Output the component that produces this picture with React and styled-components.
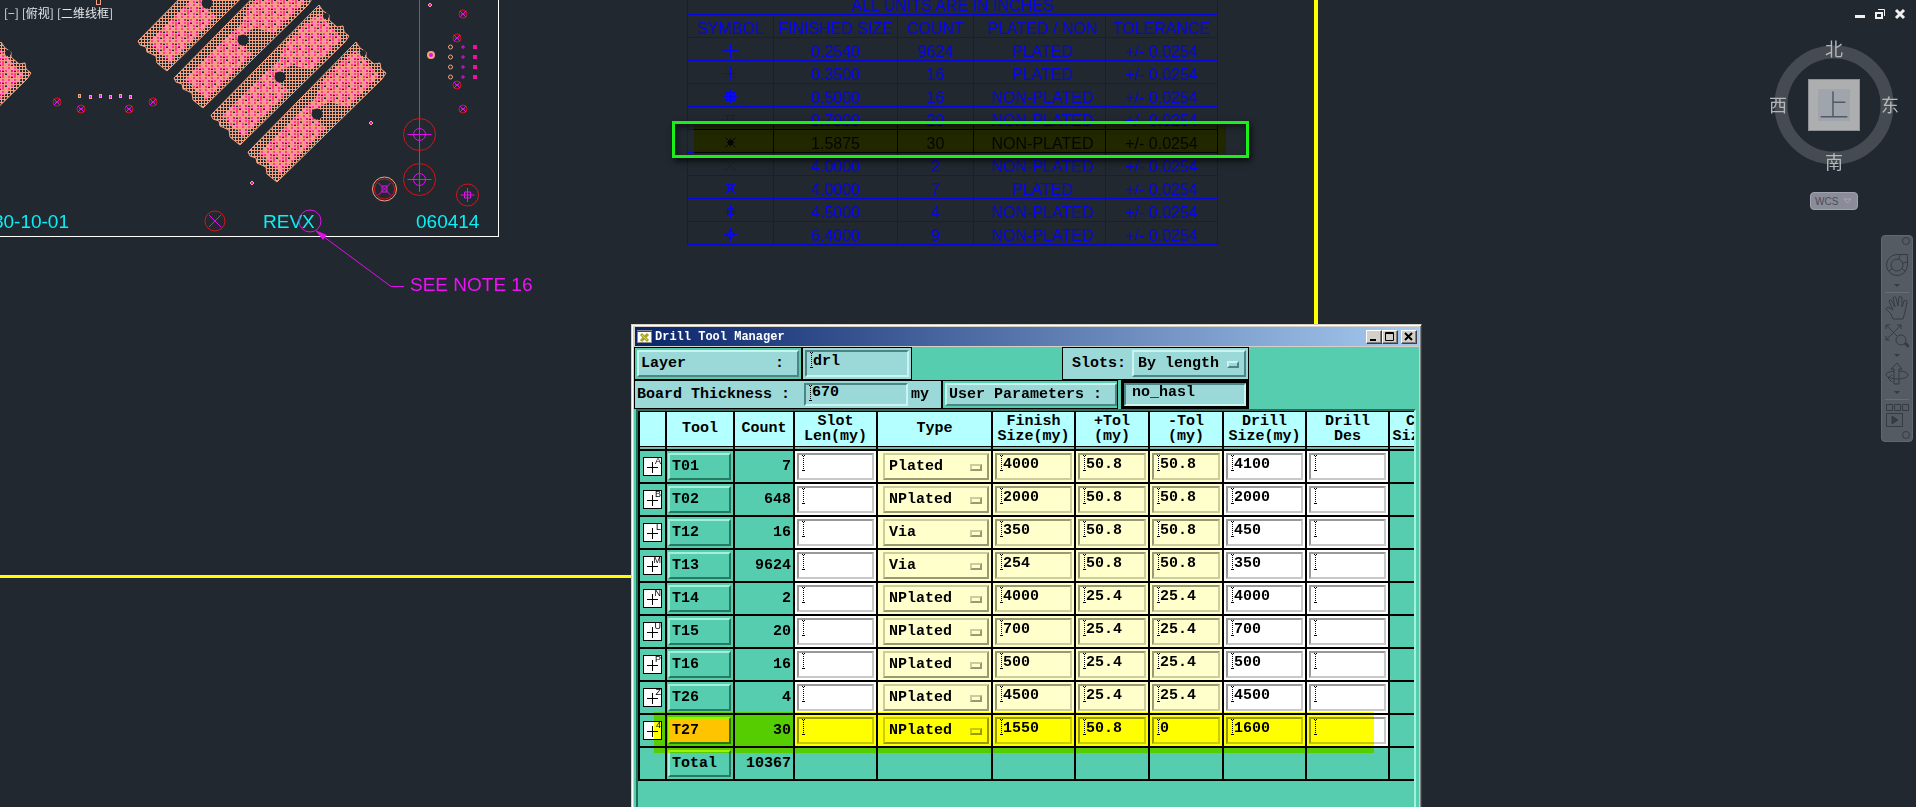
import React, { useState } from "react";
import styled, { createGlobalStyle, css } from "styled-components";

const GlobalStyle = createGlobalStyle`
  *, *::after {
    box-sizing: border-box;
  }

  body {
    margin: 0;
    background: #212830;
    font-family: "Liberation Sans", Arial, "Noto Sans CJK SC", sans-serif;
  }

  button, input, select {
    margin: 0;
    font: inherit;
    color: inherit;
    outline: none;
  }
`;

const mono = `"Liberation Mono", "Courier New", monospace`;

const raised = (light, dark) => css`
  border: 2px solid;
  border-color: ${light} ${dark} ${dark} ${light};
`;

/* ---------- board drawing ---------- */

const Desktop = styled.main`
  position: relative;
  height: 100vh;
  overflow: hidden;
  background: #212830;
`;

const Drawing = styled.svg`
  display: block;
  width: 100%;
  height: 100%;
  font-family: "Liberation Sans", Arial, sans-serif;
  font-size: 19px;
`;

const SALMON = "#f4a380";
const RED = "#d4141c";
const MAGENTA = "#e010e8";

const Finger = ({ x, y }) => (
  <g transform={`translate(${x} ${y})`}>
    <path
      d="M108 0 L112 6 L118 10 L118 15 L126 22 L132 21 L133 27 L138 31 L134 37 L29 140 L19 132 L18 125 L9 121 L8 116 L2 114 L0 110 Z"
      fill="url(#mesh)"
      stroke={SALMON}
    />
    <path
      d="M93 20 L108 8 L131 34 L100 65 L80 60 L62 72 L78 86 L32 132 L10 112 L54 68 L68 56 L72 42 Z"
      fill="url(#dots)"
    />
    <circle cx="69" cy="72" r="5.5" fill="#212830" />
    <circle cx="115" cy="11" r="3" fill="#212830" />
  </g>
);

const Pad = ({ x, y }) => (
  <g transform={`translate(${x} ${y})`} fill="none">
    <circle r="4" stroke={RED} />
    <path d="M-3 -3 L3 3 M-3 3 L3 -3 M-2 0 H2" stroke={MAGENTA} />
  </g>
);

const Hole = ({ x, y }) => (
  <g transform={`translate(${x} ${y})`} fill="none">
    <circle r="16" stroke={RED} />
    <circle r="6" stroke={MAGENTA} />
    <path d="M-12 0 H12 M0 -12 V12" stroke={MAGENTA} />
  </g>
);

const Dot = ({ x, y }) => (
  <g transform={`translate(${x} ${y})`}>
    <path d="M0 -2 L2 0 L0 2 L-2 0 Z" fill={MAGENTA} stroke={SALMON} />
  </g>
);

const Board = () => (
  <Drawing>
    <defs>
      <pattern id="mesh" width="3" height="3" patternUnits="userSpaceOnUse">
        <path d="M0 0 H3 V1 H1 V3 H0 Z" fill={SALMON} />
      </pattern>
      <pattern id="dots" width="12" height="12" patternUnits="userSpaceOnUse">
        <path
          d="M1 1h2v2h-2z M7 1h2v2h-2z M4 4h2v2h-2z M10 7h2v2h-2z M1 7h2v5h-2z M7 10h2v2h-2z M10 10h2v1h-2z M1 4h2v1h-2z"
          fill="#ff3f8c"
        />
        <path
          d="M4 1h2v2h-2z M10 1h2v2h-2z M7 4h2v5h-2z M4 10h2v2h-2z M9 7h1v2h-1z M3 1h1v2h-1z M0 6h3v1h-3z M6 9h3v1h-3z"
          fill="#ff8aa8"
        />
        <path d="M10 4h2v2h-2z M4 7h2v1h-2z" fill="#e81898" />
      </pattern>
    </defs>

    <g>
      <Finger x={138} y={-69} />
      <Finger x={174} y={-32} />
      <Finger x={211} y={5} />
      <Finger x={248} y={42} />
      <Finger x={-107} y={42} />
    </g>

    <g shapeRendering="crispEdges">
      <path d="M0 236.5 H498.5 V0" fill="none" stroke="#fff" />
      <path d="M419.5 0 V192" stroke={MAGENTA} />
      <path d="M96 0 V4 H100 V0" fill="none" stroke={SALMON} />
    </g>

    {[[57, 102], [81, 109], [129, 109], [153, 102], [463, 14], [457, 38], [457, 85], [463, 109]].map(
      ([x, y]) => <Pad key={`${x}-${y}`} x={x} y={y} />
    )}
    {[[79, 96], [90, 97], [100, 96], [110, 97], [120, 96], [130, 97]].map(([x, y]) => (
      <rect key={x} x={x - 0.5} y={y - 1.5} width="2" height="3" fill={MAGENTA} stroke={SALMON} />
    ))}
    {[47, 57, 67, 77].map((y) => (
      <g key={y}>
        <circle cx="450.5" cy={y} r="2" fill="none" stroke={SALMON} />
        <path d={`M461 ${y}h4 M463 ${y - 2}v4`} stroke={MAGENTA} />
        <rect x="473" y={y - 2} width="4" height="4" fill="#f010a0" />
      </g>
    ))}
    <circle cx="431" cy="55" r="3" fill={MAGENTA} stroke={SALMON} strokeWidth="2" />
    <Dot x={430} y={5} />
    <Dot x={371} y={123} />
    <Dot x={252} y={183} />

    <Hole x={419.5} y={134.5} />
    <Hole x={419.5} y={179.5} />
    <g fill="none" transform="translate(384.5 189)">
      <circle r="12" stroke={SALMON} />
      <circle r="10" stroke={RED} />
      <path d="M-6 -6 L6 6 M-6 6 L6 -6 M-2.5 -3 h5 v6 h-5 z" stroke={MAGENTA} />
    </g>
    <g fill="none" transform="translate(467.5 195)">
      <circle r="11" stroke={RED} />
      <path d="M-7 0 H7 M0 -7 V7 M-3 -3 h6 v6 h-6 z" stroke={MAGENTA} />
    </g>
    <g fill="none" transform="translate(215 221)">
      <circle r="10" stroke={RED} />
      <path d="M-6 -6 L6 6 M-6 6 L6 -6" stroke={MAGENTA} />
    </g>

    <g fill="#08f0f8">
      <text x="69" y="228" textAnchor="end">80-10-01</text>
      <text x="263" y="228">REVX</text>
      <text x="416" y="228">060414</text>
    </g>
    <circle cx="310" cy="221" r="11" fill="none" stroke={MAGENTA} />
    <path d="M316 231 L391 286.5 H404" fill="none" stroke={MAGENTA} />
    <path d="M315 230 L327 235 L323 240 Z" fill={MAGENTA} />
    <text x="410" y="291" fill="#f010f8">SEE NOTE 16</text>

    <g fill="#ffff00" shapeRendering="crispEdges">
      <rect x="1314" y="0" width="4" height="577" />
      <rect x="0" y="575" width="1318" height="3" />
    </g>
  </Drawing>
);

const ViewLabel = styled.div`
  position: absolute;
  top: 4px;
  left: 4px;
  display: flex;
  gap: 3px;
  color: #e4e6e8;
  font: 12px/17px "Noto Sans CJK SC", sans-serif;
`;

/* ---------- hole chart on the sheet ---------- */

const ChartArea = styled.section`
  position: absolute;
  top: -9px;
  left: 687px;
`;

const Chart = styled.table`
  border-collapse: collapse;
  table-layout: fixed;
  width: 530px;
  color: #0606e8;
  font-size: 16px;
  line-height: 17px;

  th, td {
    height: 23px;
    padding: 5px 0 0;
    border: 1px solid #0606e0;
    font-weight: normal;
    text-align: center;
    white-space: nowrap;
  }

  td:nth-child(4), th:nth-child(4) {
    padding-left: 6px;
  }

  svg {
    display: block;
    margin: 0 auto;
  }
`;

const ChartMark = styled.div`
  position: absolute;
  top: 134px;
  left: 7px;
  width: 532px;
  height: 29px;
  background: #ffff00;
  mix-blend-mode: multiply;
`;

const ChartBox = styled.div`
  position: absolute;
  top: 130px;
  left: -15px;
  width: 577px;
  height: 37px;
  border: 3px solid #18f018;
  box-shadow: 2px 3px 6px rgba(0, 0, 0, 0.7), inset 2px 3px 6px rgba(0, 0, 0, 0.5);
`;

const chartRows = [
  ["M0 -8V8 M-8 0H8", "0.2540", "9624", "PLATED"],
  ["M0 -7V7 M-7 0H7 M-5 -5L5 5 M-5 5L5 -5", "0.3500", "16", "PLATED"],
  ["M0 -7V7 M-7 0H7 M-5 -5L5 5 M-5 5L5 -5 M-4 -4h8v8h-8z", "0.5000", "16", "NON-PLATED"],
  ["M-5 -5L5 5 M-5 5L5 -5 M-3 -4h6v7h-6z", "0.7000", "20", "NON-PLATED"],
  ["M-5 -5L5 5 M-5 5L5 -5 M0 -4V4 M-4 0H4 M-2 -2h4v4h-4z", "1.5875", "30", "NON-PLATED"],
  ["M-5 -5L5 5 M-5 5L5 -5", "4.0000", "2", "NON-PLATED"],
  ["M-5 -5L5 5 M-5 5L5 -5 M-2 -4h4v7h-4z M-3 0H3", "4.0000", "7", "PLATED"],
  ["M0 -7V7 M-7 0H7 M-3 -3h6v6h-6z M-3 -3L3 3 M-3 3L3 -3", "4.5000", "4", "NON-PLATED"],
  ["M0 -7V7 M-7 0H7 M-4 0L0 -5L4 0L0 5Z", "6.4000", "9", "NON-PLATED"],
];

const HoleChart = () => (
  <ChartArea>
    <Chart>
      <colgroup>
        <col style={{ width: 86 }} />
        <col style={{ width: 124 }} />
        <col style={{ width: 76 }} />
        <col style={{ width: 132 }} />
        <col style={{ width: 112 }} />
      </colgroup>
      <thead>
        <tr>
          <th colSpan={5}>ALL UNITS ARE IN INCHES</th>
        </tr>
        <tr>
          <th>SYMBOL</th>
          <th>FINISHED SIZE</th>
          <th>COUNT</th>
          <th>PLATED / NON</th>
          <th>TOLERANCE</th>
        </tr>
      </thead>
      <tbody>
        {chartRows.map(([symbol, size, count, plated]) => (
          <tr key={size + count}>
            <td>
              <svg width="17" height="17" viewBox="0 0 17 17">
                <path d={symbol} transform="translate(8.5 7.5)" fill="none" stroke="currentColor" />
              </svg>
            </td>
            <td>{size}</td>
            <td>{count}</td>
            <td>{plated}</td>
            <td>+/- 0.0254</td>
          </tr>
        ))}
      </tbody>
    </Chart>
    <ChartMark />
    <ChartBox />
  </ChartArea>
);

/* ---------- view controls, right side ---------- */

const ViewControls = styled.div`
  position: absolute;
  top: 8px;
  right: 10px;
  display: flex;
  gap: 8px;

  button {
    width: 12px;
    height: 12px;
    padding: 0;
    border: 0;
    background: none;
  }

  svg {
    display: block;
  }
`;

const CubeArea = styled.div`
  position: absolute;
  top: 32px;
  right: 15px;
  display: flex;
  flex-direction: column;
  align-items: center;
  gap: 14px;

  svg {
    display: block;
    font-family: "Noto Sans CJK SC", sans-serif;
  }
`;

const WcsButton = styled.button`
  display: flex;
  align-items: center;
  gap: 5px;
  width: 48px;
  height: 18px;
  padding: 0 4px;
  border: 1px solid #a3a3ae;
  border-radius: 4px;
  background: #8b8c99;
  color: #4a4c58;
  font-size: 10px;
`;

const ViewCube = () => (
  <CubeArea>
    <svg width="134" height="146" viewBox="0 -6 134 146">
      <circle cx="67" cy="67" r="53" fill="none" stroke="#454b51" strokeWidth="13" />
      <rect x="41.5" y="41.5" width="51" height="51" fill="#adaeb0" stroke="#8e9194" />
      <rect x="51" y="51" width="32" height="32" fill="#a0a5ac" />
      <text x="67" y="78" fontSize="30" fontWeight="300" textAnchor="middle" fill="#505a68">上</text>
      <g fontSize="18" textAnchor="middle" fill="#b4b7ba">
        <text x="67" y="18">北</text>
        <text x="11" y="74">西</text>
        <text x="123" y="74">东</text>
        <text x="67" y="131">南</text>
      </g>
    </svg>
    <WcsButton>
      WCS
      <svg width="9" height="6">
        <path d="M1 1 H8 L4.5 5 Z" fill="none" stroke="#a6a7b2" />
      </svg>
    </WcsButton>
  </CubeArea>
);

const NavBar = styled.nav`
  position: absolute;
  top: 235px;
  right: 3px;
  display: flex;
  flex-direction: column;
  align-items: center;
  width: 32px;
  padding: 10px 0 12px;
  border: 1px solid #626870;
  border-radius: 4px;
  background: #555b63;

  svg {
    display: block;
    fill: none;
    stroke: #353b43;
  }

  button {
    padding: 0;
    border: 0;
    background: none;
  }
`;

const Caret = styled.i`
  margin: 4px 0;
  border: 3px solid transparent;
  border-top-color: #353b43;
  border-bottom: 0;
`;

const Divider = styled.hr`
  width: 24px;
  margin: 1px 0;
  border: 0;
  border-top: 1px solid #686e76;
`;

const NavCorner = styled.span`
  position: absolute;
  right: 2px;
  ${(props) => (props.$bottom ? "bottom: 2px;" : "top: 1px;")}
  width: 8px;
  height: 8px;
  border: 1px solid #353b43;
  border-radius: 50%;
`;

const NavigationBar = () => (
  <NavBar>
    <NavCorner />
    <button aria-label="Steering wheel">
      <svg width="24" height="34">
        <path d="M12 8.500 H22.500 V19 A10.5 10.5 0 1 1 12 8.500" />
        <circle cx="12" cy="19" r="6" />
        <path d="M4 25 L8 22 M20 25 L16 22 M15 8.500 L14 13 M22 16 L18 17" />
      </svg>
    </button>
    <Caret />
    <Divider />
    <button aria-label="Pan">
      <svg width="24" height="28">
        <path d="M8 25 L6 20 L1 15 Q2 12 5 14 L8 16 L4 7 Q5 4 7 7 L10 13 L8 4 Q10 1 11 4 L13 12 L14 3 Q16 1 17 4 V13 L19 7 Q22 5 22 8 L20 18 L18 25 Z" />
      </svg>
    </button>
    <button aria-label="Zoom extents">
      <svg width="24" height="28">
        <path d="M1 7 V3 H5 M1 3 L16 18 M12 3 H16 V7 M16 3 L1 18 M1 14 V18 H5" />
        <circle cx="16" cy="18" r="5" fill="#555b63" />
        <path d="M20 21 L24 25" strokeWidth="3" />
      </svg>
    </button>
    <Caret />
    <button aria-label="Orbit">
      <svg width="24" height="26">
        <path d="M9 23 V8 H6 L12 2 L17 8 H14 V23 Z" />
        <path d="M9 10 Q1 11 1 14 Q3 18 14 18 Q23 17 23 14 Q22 10 14 10 M7 14 L3 17 L7 21" />
      </svg>
    </button>
    <Caret />
    <Divider />
    <button aria-label="Show motion">
      <svg width="24" height="28">
        <path d="M1.5 3.5 h6 v6 h-6 z M9.5 3.5 h6 v6 h-6 z M17.5 3.5 h6 v6 h-6 z M1.5 12.5 h16 v13 h-16 z" />
        <path d="M7 15 L13 19 L7 23 Z" fill="#353b43" />
      </svg>
    </button>
    <NavCorner $bottom />
  </NavBar>
);

/* ---------- Drill Tool Manager window ---------- */

const GREEN = "#55cdae";
const AQUA = "#9bd9d9";

const Window = styled.section`
  position: absolute;
  top: 324px;
  left: 631px;
  width: 791px;
  padding: 2px;
  border: 1px solid #d4d0c8;
  border-right-color: #404040;
  background: #d4d0c8;
  box-shadow: inset 1px 1px #fff, inset -1px 0 #808080;
  font: bold 15px/17px ${mono};
  color: #000;
`;

const TitleBar = styled.header`
  display: flex;
  align-items: center;
  gap: 2px;
  height: 20px;
  margin-left: 1px;
  padding: 1px 2px 0 2px;
  border-bottom: 1px solid #d4d0c8;
  background: linear-gradient(90deg, #0a246a, #a6caf0);
  color: #fff;

  h1 {
    flex: 1;
    margin: 0;
    font: bold 12px/16px ${mono};
  }
`;

const TitleButton = styled.button`
  width: 16px;
  height: 14px;
  padding: 0;
  border: 1px solid;
  border-color: #fff #404040 #404040 #fff;
  background: #d4d0c8;
  box-shadow: inset -1px -1px #808080;

  & + & {
    margin-left: -2px;
  }

  &:last-child {
    margin-left: 1px;
  }

  svg {
    display: block;
  }
`;

const Content = styled.div`
  padding: 0 3px 0 0;
  min-height: 500px;
  background: ${GREEN};
`;

const FormRow = styled.div`
  display: flex;
  width: 615px;
  height: ${(props) => props.$height}px;
`;

const Group = styled.div`
  display: flex;
  align-items: center;
  width: ${(props) => props.$width}px;
  padding: 2px;
  border: 1px solid #000;
  background: ${(props) => (props.$plain ? GREEN : AQUA)};
  margin-left: ${(props) => (props.$end ? "auto" : 0)};
`;

const FormButton = styled.button`
  flex: 1;
  height: 100%;
  display: flex;
  align-items: center;
  justify-content: space-between;
  padding: 0 13px 0 2px;
  white-space: pre;
  background: ${AQUA};
  ${raised("#c8f4f2", "#4d8484")}
`;

const beam = css`
  background-image: repeating-linear-gradient(#000 0 1px, transparent 1px 2px),
    repeating-linear-gradient(90deg, #000 0 1px, transparent 1px 2px),
    repeating-linear-gradient(90deg, #000 0 1px, transparent 1px 2px);
  background-size: 1px 15px, 3px 1px, 3px 1px;
  background-position: 4px 1px, 3px 0, 3px 15px;
  background-repeat: no-repeat;
`;

const FormInput = styled.input`
  width: ${(props) => props.$width};
  height: 100%;
  padding: 0 0 4px 6px;
  background-color: ${AQUA};
  border: 2px solid;
  border-color: #4d8484 #c8f4f2 #c8f4f2 #4d8484;
  ${(props) => !props.$noBeam && beam}
`;

const FormLabel = styled.label`
  flex: 1;
  padding-left: ${(props) => props.$indent || "0"};
  white-space: nowrap;
`;

const Unit = styled.span`
  width: 31px;
  padding-left: 3px;
`;

const ActiveBox = styled.div`
  width: 128px;
  margin-left: auto;
  border: 3px solid #000;
`;

const SelectWrap = styled.span`
  position: relative;
  display: block;
  width: ${(props) => props.$width};
  height: ${(props) => props.$height};
  margin-left: auto;

  &::after {
    content: "";
    position: absolute;
    top: 50%;
    right: 7px;
    width: 12px;
    height: 7px;
    margin-top: -3px;
    pointer-events: none;
    ${(props) => (props.$aqua ? raised("#c8f4f2", "#4d8484") : raised("#cccc9c", "#999973"))}
  }

  select {
    appearance: none;
    display: block;
    width: 100%;
    height: 100%;
    padding: 0 0 0 4px;
    border-radius: 0;
    background: ${(props) => (props.$aqua ? AQUA : "#ffffcc")};
    ${(props) => (props.$aqua ? raised("#c8f4f2", "#4d8484") : raised("#cccc9c", "#999973"))}
  }
`;

const TableFrame = styled.div`
  margin: 0 0 0 2px;
  overflow: hidden;
  min-height: 410px;
  border-top: 2px solid #35695b;
  border-left: 2px solid #1f7059;
  border-right: 2px solid #a0f4dc;
`;

const ToolTable = styled.table`
  border-collapse: separate;
  border-spacing: 0;
  border-left: 2px solid #000;
  table-layout: fixed;
  width: 831px;

  th, td {
    padding: 0;
    border-right: 2px solid #000;
    border-bottom: 2px solid #000;
  }

  th {
    height: 40px;
    padding-bottom: 3px;
    background: #b4ffff;
    box-shadow: inset 0 1px #000, inset 0 -2px #76b9ad, inset 0 -3px #000;
    line-height: 15px;
    white-space: pre-line;
  }

  tr {
    position: relative;
  }
`;

const Cell = styled.td`
  && {
    height: 33px;
    padding: ${(props) => (props.$pad ? "0 2px" : "0")};
    background: ${(props) => props.$bg || GREEN};
    text-align: ${(props) => (props.$right ? "right" : "left")};
  }
`;

const CellInput = styled.input`
  display: block;
  width: 100%;
  height: 27px;
  padding: 0 0 4px 6px;
  background-color: ${(props) => (props.$pale ? "#ffffcc" : "#fff")};
  border: 2px solid;
  border-color: ${(props) =>
    props.$pale ? "#999973 #cccc9c #cccc9c #999973" : "#999 #c8c8c8 #c8c8c8 #999"};
  ${beam}
`;

const ToolButton = styled.button`
  display: block;
  width: 63px;
  height: 27px;
  margin-left: 1px;
  padding: 0 2px;
  text-align: left;
  background: ${(props) => (props.$selected ? "#ffc400" : GREEN)};
  ${raised("#a0f0da", "#267a62")}
`;

const Count = styled.span`
  padding-right: 2px;
`;

const SymbolIcon = styled.svg`
  display: block;
  margin: 0 auto;
  font: 9px "Liberation Sans", Arial, sans-serif;
`;

const Highlighter = styled.div`
  position: absolute;
  z-index: 1;
  top: -3px;
  left: 14px;
  width: 720px;
  height: 41px;
  background: #ffff00;
  mix-blend-mode: multiply;
  pointer-events: none;
`;

const columns = [
  ["", 27],
  ["Tool", 68],
  ["Count", 60],
  ["Slot\nLen(my)", 83],
  ["Type", 115],
  ["Finish\nSize(my)", 83],
  ["+Tol\n(my)", 74],
  ["-Tol\n(my)", 74],
  ["Drill\nSize(my)", 83],
  ["Drill\nDes", 83],
  ["Comp.\nSize(my)", 79],
];

const tools = [
  { mark: "A", name: "T01", count: 7, type: "Plated", finish: "4000", plus: "50.8", minus: "50.8", drill: "4100" },
  { mark: "B", name: "T02", count: 648, type: "NPlated", finish: "2000", plus: "50.8", minus: "50.8", drill: "2000" },
  { mark: "L", name: "T12", count: 16, type: "Via", finish: "350", plus: "50.8", minus: "50.8", drill: "450" },
  { mark: "M", name: "T13", count: 9624, type: "Via", finish: "254", plus: "50.8", minus: "50.8", drill: "350" },
  { mark: "N", name: "T14", count: 2, type: "NPlated", finish: "4000", plus: "25.4", minus: "25.4", drill: "4000" },
  { mark: "U", name: "T15", count: 20, type: "NPlated", finish: "700", plus: "25.4", minus: "25.4", drill: "700" },
  { mark: "P", name: "T16", count: 16, type: "NPlated", finish: "500", plus: "25.4", minus: "25.4", drill: "500" },
  { mark: "Z", name: "T26", count: 4, type: "NPlated", finish: "4500", plus: "25.4", minus: "25.4", drill: "4500" },
  { mark: "4", name: "T27", count: 30, type: "NPlated", finish: "1550", plus: "50.8", minus: "0", drill: "1600", marked: true },
];

const ToolRow = ({ tool }) => {
  const [type, setType] = useState(tool.type);
  const label = (field) => `${tool.name} ${field}`;
  return (
    <tr>
      <Cell>
        <SymbolIcon width="19" height="19">
          <rect x="0.5" y="0.5" width="18" height="18" fill="#fff" stroke="#000" />
          <path d="M4 10.5 H15 M9.5 5 V16" stroke="#000" />
          <text x="18" y="7" textAnchor="end">{tool.mark}</text>
        </SymbolIcon>
        {tool.marked && <Highlighter />}
      </Cell>
      <Cell>
        <ToolButton $selected={tool.marked}>{tool.name}</ToolButton>
      </Cell>
      <Cell $right>
        <Count>{tool.count}</Count>
      </Cell>
      <Cell $bg="#fff" $pad>
        <CellInput aria-label={label("slot length")} />
      </Cell>
      <Cell $bg="#ffffcc" $pad>
        <SelectWrap $width="106px" $height="27px">
          <select aria-label={label("type")} value={type} onChange={(e) => setType(e.target.value)}>
            <option>Plated</option>
            <option>NPlated</option>
            <option>Via</option>
          </select>
        </SelectWrap>
      </Cell>
      <Cell $bg="#ffffcc" $pad>
        <CellInput $pale aria-label={label("finish size")} defaultValue={tool.finish} />
      </Cell>
      <Cell $bg="#ffffcc" $pad>
        <CellInput $pale aria-label={label("plus tolerance")} defaultValue={tool.plus} />
      </Cell>
      <Cell $bg="#ffffcc" $pad>
        <CellInput $pale aria-label={label("minus tolerance")} defaultValue={tool.minus} />
      </Cell>
      <Cell $bg="#fff" $pad>
        <CellInput aria-label={label("drill size")} defaultValue={tool.drill} />
      </Cell>
      <Cell $bg="#fff" $pad>
        <CellInput aria-label={label("drill designation")} />
      </Cell>
      <Cell />
    </tr>
  );
};

const DrillToolManager = () => (
  <Window>
    <TitleBar>
      <svg width="16" height="14">
        <rect x="0.5" y="0.5" width="14" height="12" fill="#fff" stroke="#8c8c8c" />
        <path d="M0 1.5 H15" stroke="#404858" />
        <path d="M4 4 L11 11 M11 4 L4 11" stroke="#a8a820" strokeWidth="3" />
        <path d="M5 5 L10 10" stroke="#e8e040" />
      </svg>
      <h1>Drill Tool Manager</h1>
      <TitleButton aria-label="Minimize">
        <svg width="14" height="12"><rect x="3" y="8" width="6" height="2" /></svg>
      </TitleButton>
      <TitleButton aria-label="Maximize">
        <svg width="14" height="12">
          <path d="M2.5 1.5 h8 v8 h-8 z M2 2.5 h9" fill="none" stroke="#000" />
        </svg>
      </TitleButton>
      <TitleButton aria-label="Close">
        <svg width="14" height="12">
          <path d="M3 2 L10 9 M10 2 L3 9" stroke="#000" strokeWidth="2" />
        </svg>
      </TitleButton>
    </TitleBar>
    <Content>
      <FormRow $height={33}>
        <Group $width={168} $plain>
          <FormButton>
            <span>Layer</span>
            <span>:</span>
          </FormButton>
        </Group>
        <Group $width={110}>
          <FormInput $width="100%" aria-label="Layer" defaultValue="drl" />
        </Group>
        <Group $width={187} $end>
          <FormLabel htmlFor="slots" $indent="7px">Slots:</FormLabel>
          <SelectWrap $aqua $width="114px" $height="100%">
            <select id="slots">
              <option>By length</option>
              <option>By count</option>
            </select>
          </SelectWrap>
        </Group>
      </FormRow>
      <FormRow $height={29}>
        <Group $width={308}>
          <FormLabel htmlFor="thickness">Board Thickness :</FormLabel>
          <FormInput id="thickness" $width="104px" defaultValue="670" />
          <Unit>my</Unit>
        </Group>
        <Group $width={176} $plain>
          <FormButton>User Parameters :</FormButton>
        </Group>
        <ActiveBox>
          <FormInput $noBeam $width="100%" aria-label="User Parameters" defaultValue="no_hasl" />
        </ActiveBox>
      </FormRow>
      <TableFrame>
        <ToolTable>
          <colgroup>
            {columns.map(([title, width]) => (
              <col key={title} style={{ width }} />
            ))}
          </colgroup>
          <thead>
            <tr>
              {columns.map(([title]) => (
                <th key={title}>{title}</th>
              ))}
            </tr>
          </thead>
          <tbody>
            {tools.map((tool) => (
              <ToolRow key={tool.name} tool={tool} />
            ))}
            <tr>
              <Cell />
              <Cell>
                <ToolButton>Total</ToolButton>
              </Cell>
              <Cell $right>
                <Count>10367</Count>
              </Cell>
              {columns.slice(3).map(([title]) => (
                <Cell key={title} />
              ))}
            </tr>
          </tbody>
        </ToolTable>
      </TableFrame>
    </Content>
  </Window>
);

const App = () => (
  <>
    <GlobalStyle />
    <Desktop>
      <Board />
      <ViewLabel>
        <span>[−]</span>
        <span>[俯视]</span>
        <span>[二维线框]</span>
      </ViewLabel>
      <HoleChart />
      <ViewControls>
        <button aria-label="Minimize view">
          <svg width="12" height="12"><rect x="1" y="7" width="10" height="3" fill="#f0f0f0" /></svg>
        </button>
        <button aria-label="Restore view">
          <svg width="12" height="12" fill="none" stroke="#f0f0f0">
            <path d="M2 5 h6 v5 h-6 z" strokeWidth="2" />
            <path d="M4 1.5 H10.5 V8" />
          </svg>
        </button>
        <button aria-label="Close view">
          <svg width="12" height="12">
            <path d="M2 2 L10 10 M10 2 L2 10" stroke="#f0f0f0" strokeWidth="3" />
          </svg>
        </button>
      </ViewControls>
      <ViewCube />
      <NavigationBar />
      <DrillToolManager />
    </Desktop>
  </>
);

export default App;
